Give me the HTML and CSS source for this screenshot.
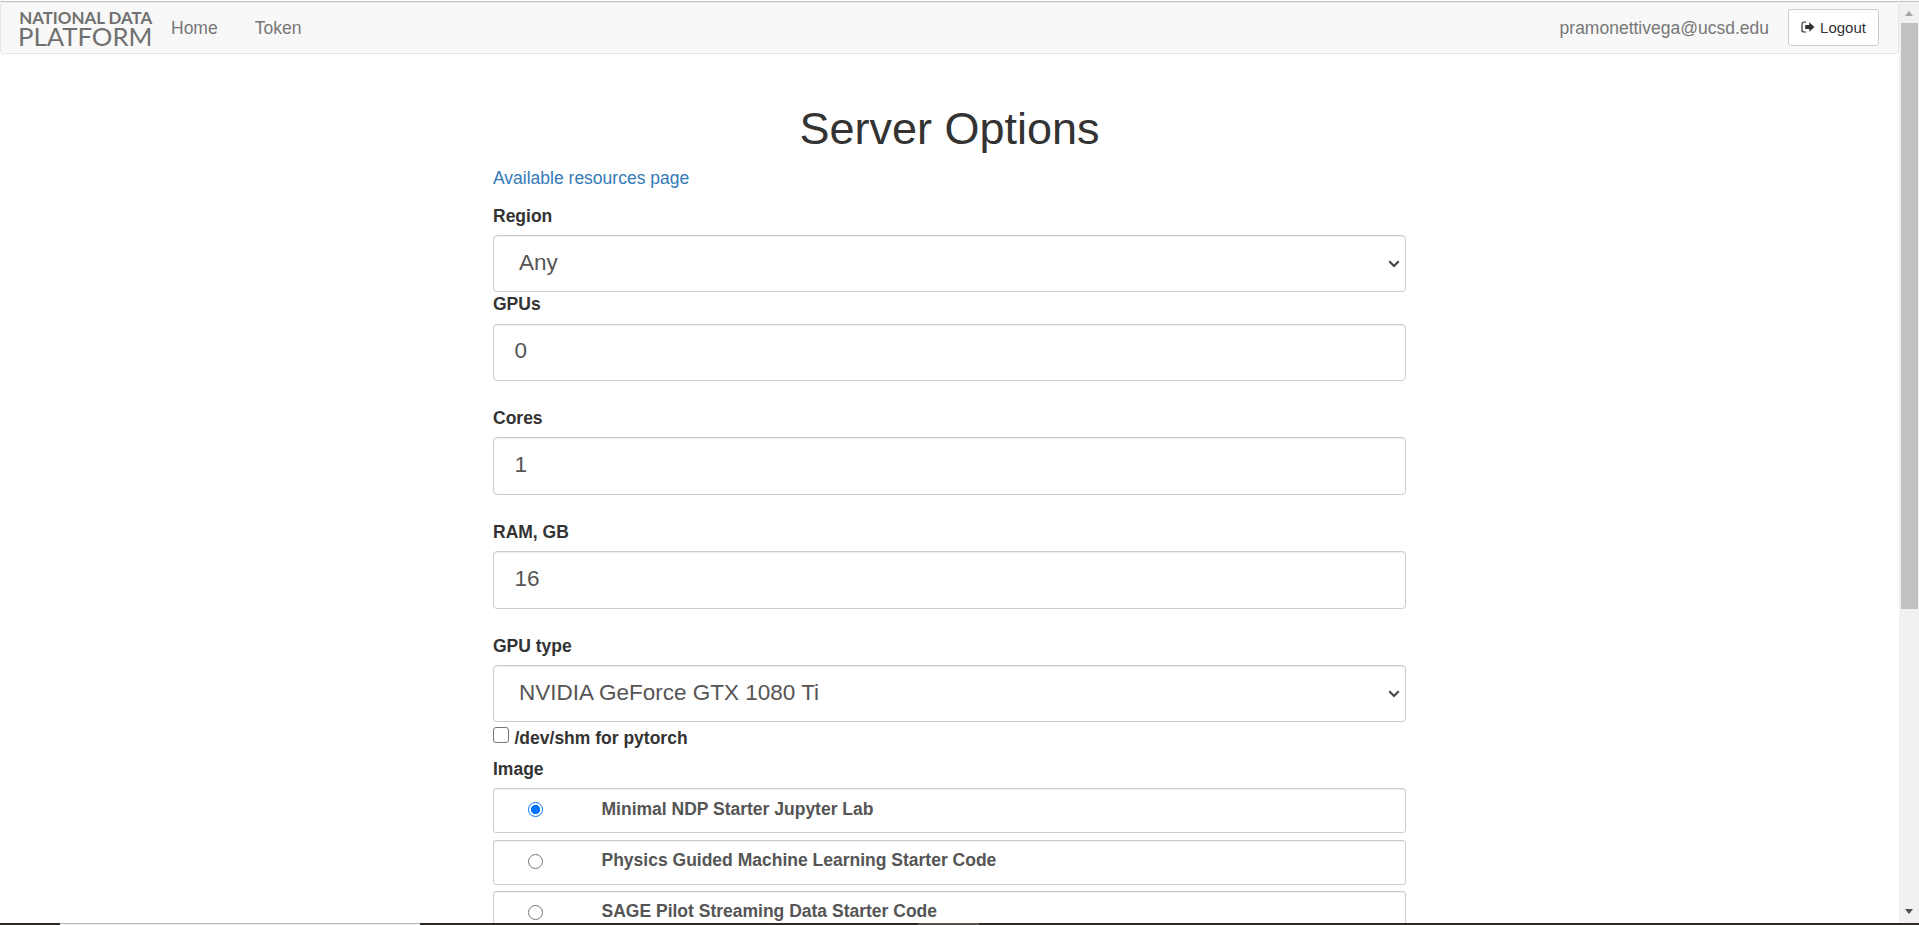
FILE: index.html
```
<!DOCTYPE html>
<html lang="en">
<head>
<meta charset="utf-8">
<title>Server Options</title>
<link rel="stylesheet" href="styles.css">
</head>
<body>
<div class="window">
  <div class="viewport">
    <div class="page">
      <nav class="navbar">
        <svg class="logo" width="134" height="38" viewBox="0 0 134 38">
          <text class="logo-top" x="-0.8" y="17.6" textLength="133" lengthAdjust="spacingAndGlyphs">NATIONAL DATA</text>
          <text class="logo-bottom" x="-2" y="39.6" textLength="134.5" lengthAdjust="spacingAndGlyphs">PLATFORM</text>
        </svg>
        <a class="nav-link">Home</a>
        <a class="nav-link">Token</a>
        <span class="user">pramonettivega@ucsd.edu</span>
        <a class="logout">
          <svg width="14" height="12" viewBox="0 0 14 12"><path d="M5.2 1H3A2 2 0 0 0 1 3v6a2 2 0 0 0 2 2h2.2" fill="none" stroke="#333" stroke-width="1.2"/><path d="M4.2 3.9h4V1.2L13.5 6 8.2 10.8V8.1h-4z" fill="#333"/></svg>
          Logout
        </a>
      </nav>
      <main class="form">
        <h1 class="title">Server Options</h1>
        <a class="resources">Available resources page</a>
        <label class="label">Region</label>
        <div class="control select">Any <svg class="chevron" width="12" height="8" viewBox="0 0 12 8"><path d="M1.3 1.3 6 6l4.7-4.7" fill="none" stroke="#444" stroke-width="2.1"/></svg></div>
        <label class="label">GPUs</label>
        <div class="control spaced">0</div>
        <label class="label">Cores</label>
        <div class="control spaced">1</div>
        <label class="label">RAM, GB</label>
        <div class="control spaced">16</div>
        <label class="label">GPU type</label>
        <div class="control select">NVIDIA GeForce GTX 1080 Ti <svg class="chevron" width="12" height="8" viewBox="0 0 12 8"><path d="M1.3 1.3 6 6l4.7-4.7" fill="none" stroke="#444" stroke-width="2.1"/></svg></div>
        <label class="check-row"><span class="checkbox"></span>/dev/shm for pytorch</label>
        <label class="label">Image</label>
        <div class="option"><span class="radio checked"></span>Minimal NDP Starter Jupyter Lab</div>
        <div class="option"><span class="radio"></span>Physics Guided Machine Learning Starter Code</div>
        <div class="option"><span class="radio"></span>SAGE Pilot Streaming Data Starter Code</div>
      </main>
    </div>
    <div class="scrollbar">
      <span class="arrow up"></span>
      <span class="thumb"></span>
      <span class="arrow down"></span>
    </div>
  </div>
  <div class="taskbar"><span class="task-light"></span><span class="task-active"></span></div>
</div>
</body>
</html>
```
FILE: styles.css
```
* { box-sizing: border-box; }
body {
  margin: 0;
  font-family: "Liberation Sans", Arial, sans-serif;
  font-size: 17.5px;
  line-height: 25px;
  color: #333;
  background: #fff;
  overflow: hidden;
}
.window { height: 925px; display: flex; flex-direction: column; border-top: 1px solid #fafafa; }
.viewport { height: 922px; display: flex; border-top: 1px solid #c4c8c6; overflow: hidden; }
.page { width: 1899px; height: 921px; overflow: hidden; }
.navbar {
  height: 52px;
  display: flex;
  align-items: center;
  padding: 0 19px;
  background: #f8f8f8;
  border: 1px solid #e7e7e7;
  border-radius: 3px;
  color: #777;
}
.logo { flex: none; overflow: visible; margin-top: -6px; }
.logo-top, .logo-bottom { font-family: Lato, sans-serif; fill: #707070; }
.logo-top { font-size: 16.2px; font-weight: 700; }
.logo-bottom { font-size: 25px; font-weight: 400; }
.nav-link { margin-left: 17px; }
.nav-link + .nav-link { margin-left: 37px; }
.user { margin-left: auto; margin-right: 19px; }
.logout {
  width: 91px;
  height: 37px;
  margin-top: -2px;
  display: flex;
  align-items: center;
  justify-content: center;
  gap: 5px;
  font-size: 15px;
  color: #333;
  background: #fff;
  border: 1px solid #ccc;
  border-radius: 3px;
}
.form { width: 913px; margin: 0 auto; padding-top: 50.2px; display: flex; flex-direction: column; }
.title { margin: 0 0 12.5px; font-size: 45px; line-height: 49.5px; text-align: center; font-weight: 400; }
.resources { color: #337ab7; margin-bottom: 13px; }
.label { font-weight: 700; margin-bottom: 6.25px; }
.control {
  height: 57.5px;
  display: flex;
  align-items: center;
  padding: 0 20px 3px 20.5px;
  font-size: 22.5px;
  color: #555;
  border: 1px solid #ccc;
  border-radius: 4px;
  box-shadow: inset 0 1px 1px rgba(0, 0, 0, .075);
}
.select { height: 57px; justify-content: space-between; padding: 0 5px 2px 25px; }
.chevron { margin-top: 3px; }
.spaced { margin-bottom: 25px; }
.check-row { display: flex; align-items: center; margin: 3.8px 0 6.2px; font-weight: 700; }
.checkbox { width: 16px; height: 16px; margin: -6px 5.5px 0 0; border: 1px solid #767676; border-radius: 3px; }
.option {
  height: 45px;
  flex: none;
  display: flex;
  align-items: center;
  margin-bottom: 6.4px;
  padding: 0 34px 3px;
  font-weight: 700;
  color: #555;
  border: 1px solid #ccc;
  border-radius: 3px;
  box-shadow: inset 0 1px 1px rgba(0, 0, 0, .075);
}
.radio { width: 15px; height: 15px; margin: 1px 58.5px 0 0; border: 1px solid #767676; border-radius: 50%; }
.radio.checked { border-color: #0075ff; background: radial-gradient(circle, #0075ff 4.3px, #fff 5px); }
.scrollbar { width: 20px; background: #f1f1f1; display: flex; flex-direction: column; align-items: center; }
.arrow { width: 0; height: 0; border: 4.5px solid transparent; flex: none; }
.up { margin-top: 5px; border-bottom: 5px solid #a3a3a3; border-top-width: 4px; }
.thumb { width: 17px; height: 586px; margin-top: 7px; background: #c1c1c1; }
.down { margin: auto 0 5px; border-top: 5px solid #505050; border-bottom-width: 4px; }
.taskbar { height: 2px; display: flex; background: #2d2925; }
.task-light { width: 360px; margin-left: 60px; background: #eee; border-top: 1px solid #bbb; }
.task-active { width: 61px; margin-left: 498px; background: #56524f; }
```
